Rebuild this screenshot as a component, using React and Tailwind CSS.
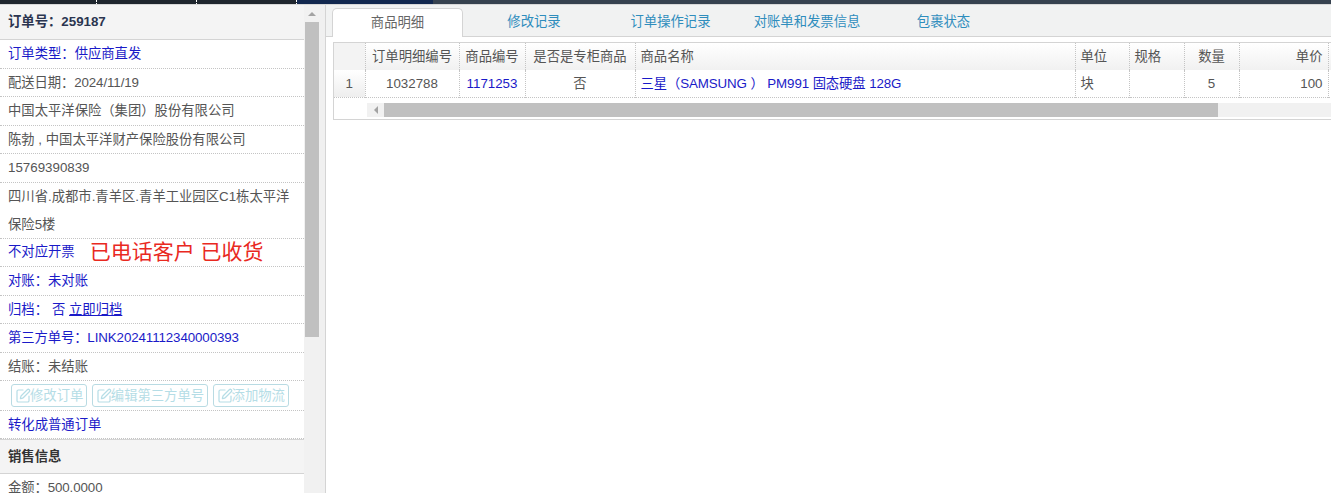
import React from 'react';
import { SquarePen } from 'lucide-react';

const FONT = '[font-family:Arial,"Liberation_Sans","Noto_Sans_CJK_SC",sans-serif]';

const Row = ({ blue, children, className = '' }) => (
  <div
    className={`h-[28.5px] leading-[28px] pl-[8px] pr-[8px] border-b border-dotted border-[#c4c4c4] whitespace-nowrap overflow-hidden ${
      blue ? 'text-[#1a1ac8]' : 'text-[#555]'
    } ${className}`}
  >
    {children}
  </div>
);

const EditButton = ({ label }) => (
  <span className="flex items-center h-[23px] px-[3px] border border-[#b9dbe3] rounded-[3px] text-[#b5dde6] leading-none">
    <SquarePen size={16} strokeWidth={1.8} className="-mr-[1px] shrink-0" />
    {label}
  </span>
);

const SidePanel = () => (
  <div className="w-[304px] shrink-0 h-[488px] overflow-hidden text-[13.33px]">
    <div className="h-[35px] leading-[33px] pl-[8px] bg-[#f4f4f4] border-b border-[#d4d4d4] font-bold text-[#2b3550]">
      订单号：259187
    </div>
    <Row blue>订单类型：供应商直发</Row>
    <Row className="tracking-[-0.1px]">配送日期：2024/11/19</Row>
    <Row>中国太平洋保险（集团）股份有限公司</Row>
    <Row>陈勃 , 中国太平洋财产保险股份有限公司</Row>
    <Row>15769390839</Row>
    <Row className="h-[56px]! whitespace-normal!">
      四川省.成都市.青羊区.青羊工业园区C1栋太平洋保险5楼
    </Row>
    <Row blue className="flex items-center">
      <span>不对应开票</span>
      <span className="ml-[15px] text-[21px] text-[#e9291f]">已电话客户 已收货</span>
    </Row>
    <Row blue>对账：未对账</Row>
    <Row blue>
      归档：<span className="ml-[4px]">否</span> <span className="underline">立即归档</span>
    </Row>
    <Row blue className="tracking-[-0.1px]">第三方单号：LINK20241112340000393</Row>
    <Row>结账：未结账</Row>
    <div className="h-[30px] pl-[11px] pt-[3px] flex gap-[4.5px] border-b border-dotted border-[#c4c4c4]">
      <EditButton label="修改订单" />
      <EditButton label="编辑第三方单号" />
      <EditButton label="添加物流" />
    </div>
    <Row blue className="h-[28px]!">转化成普通订单</Row>
    <div className="h-[35px] leading-[33px] pl-[8px] bg-[#f4f4f4] border-y border-[#d4d4d4] font-bold text-[#333]">
      销售信息
    </div>
    <Row className="tracking-[-0.1px]">金额：500.0000</Row>
  </div>
);

const SideScrollbar = () => (
  <div className="w-[16px] shrink-0 bg-[#f1f1f1] flex flex-col items-center">
    <div className="h-[17px] flex items-center justify-center">
      <span className="w-0 h-0 border-x-[4px] border-x-transparent border-b-[4px] border-b-[#a3a3a3]" />
    </div>
    <div className="w-[14px] h-[315px] bg-[#c0c0c0]" />
  </div>
);

const TABS = ['商品明细', '修改记录', '订单操作记录', '对账单和发票信息', '包裹状态'];

const Tabs = () => (
  <div className="h-[32px] pl-[6px] pt-[3px] flex items-end bg-[#f1f2f2] border-b border-[#d4d4d4]">
    {TABS.map((tab, i) => (
      <div
        key={tab}
        className={`w-[131px] mr-[5.5px] shrink-0 text-center text-[13.33px] whitespace-nowrap ${
          i === 0
            ? 'h-[29px] leading-[27px] -mb-px bg-white border border-b-0 border-[#d4d4d4] rounded-t-[5px] text-[#666]'
            : 'h-[28px] leading-[27px] text-[#2f8dbd]'
        }`}
      >
        {tab}
      </div>
    ))}
  </div>
);

const COLUMNS = [
  { label: '', width: 'w-[31px]', align: 'text-center' },
  { label: '订单明细编号', width: 'w-[94px]', align: 'text-center' },
  { label: '商品编号', width: 'w-[66px]', align: 'text-center' },
  { label: '是否是专柜商品', width: 'w-[110px]', align: 'text-center' },
  { label: '商品名称', width: 'w-[440px]', align: 'text-left' },
  { label: '单位', width: 'w-[54px]', align: 'text-left' },
  { label: '规格', width: 'w-[55px]', align: 'text-left' },
  { label: '数量', width: 'w-[55px]', align: 'text-center' },
  { label: '单价', width: 'w-[89px]', align: 'text-right' },
  { label: '', width: 'w-[20px]', align: 'text-left' },
];

const CELLS = [
  { text: '1', bg: 'bg-gradient-to-b from-white to-[#eeeeee]' },
  { text: '1032788' },
  { text: '1171253', blue: true },
  { text: '否' },
  { text: '三星（SAMSUNG ） PM991 固态硬盘 128G', blue: true, tight: true },
  { text: '块' },
  { text: '' },
  { text: '5' },
  { text: '100' },
  { text: '' },
];

const DetailTable = () => (
  <div className="ml-[7px] mt-[5px] border-y border-l border-[#d4d4d4] overflow-hidden">
    <table className="table-fixed border-collapse text-[13.33px] w-[1014px]">
      <colgroup>
        {COLUMNS.map((col, i) => (
          <col key={i} className={col.width} />
        ))}
      </colgroup>
      <thead>
        <tr className="h-[27px] bg-gradient-to-b from-white to-[#f1f1f1]">
          {COLUMNS.map((col, i) => (
            <th
              key={i}
              className={`px-[5px] font-normal text-[#555] whitespace-nowrap border-r border-dotted border-[#c4c4c4] ${col.align} ${
                i === 0 ? 'bg-[#f3f3f3]' : ''
              }`}
            >
              {col.label}
            </th>
          ))}
        </tr>
      </thead>
      <tbody>
        <tr className="h-[27px] border-b border-dotted border-[#c4c4c4]">
          {CELLS.map((cell, i) => (
            <td
              key={i}
              className={`px-[5px] pt-[2px] pb-0 whitespace-nowrap border-r border-dotted border-[#c4c4c4] ${COLUMNS[i].align} ${
                cell.blue ? 'text-[#1a1ac8]' : 'text-[#555]'
              } ${cell.tight ? 'tracking-[-0.1px]' : ''} ${cell.bg || ''}`}
            >
              {cell.text}
            </td>
          ))}
        </tr>
      </tbody>
    </table>
    <div className="h-[21px] bg-white pl-[33px] pt-[5px]">
      <div className="w-full h-[14px] flex bg-[#f1f1f1]">
        <div className="w-[17px] flex items-center justify-center">
          <span className="w-0 h-0 border-y-[4px] border-y-transparent border-r-[4px] border-r-[#a3a3a3]" />
        </div>
        <div className="w-[834px] bg-[#c0c0c0]" />
      </div>
    </div>
  </div>
);

const TopBar = () => (
  <div className="h-[4px] flex bg-[#36424f]">
    <div className="w-[297px] bg-[#1f262e] flex">
      <div className="w-[97px] border-r border-dotted border-white" />
      <div className="w-[100px] border-r border-dotted border-white" />
      <div className="w-[100px] border-r border-dotted border-white" />
    </div>
    <div className="w-[136px] bg-[#12284f]" />
  </div>
);

export default function App() {
  return (
    <div className={`w-[1331px] h-[493px] overflow-hidden bg-white ${FONT}`}>
      <TopBar />
      <div className="h-px bg-[#d8d8d8]" />
      <div className="flex h-[488px]">
        <SidePanel />
        <SideScrollbar />
        <div className="w-[6px] shrink-0 bg-[#f0f0f0] border-r border-[#d4d4d4]" />
        <div className="flex-1 min-w-0">
          <Tabs />
          <DetailTable />
        </div>
      </div>
    </div>
  );
}
